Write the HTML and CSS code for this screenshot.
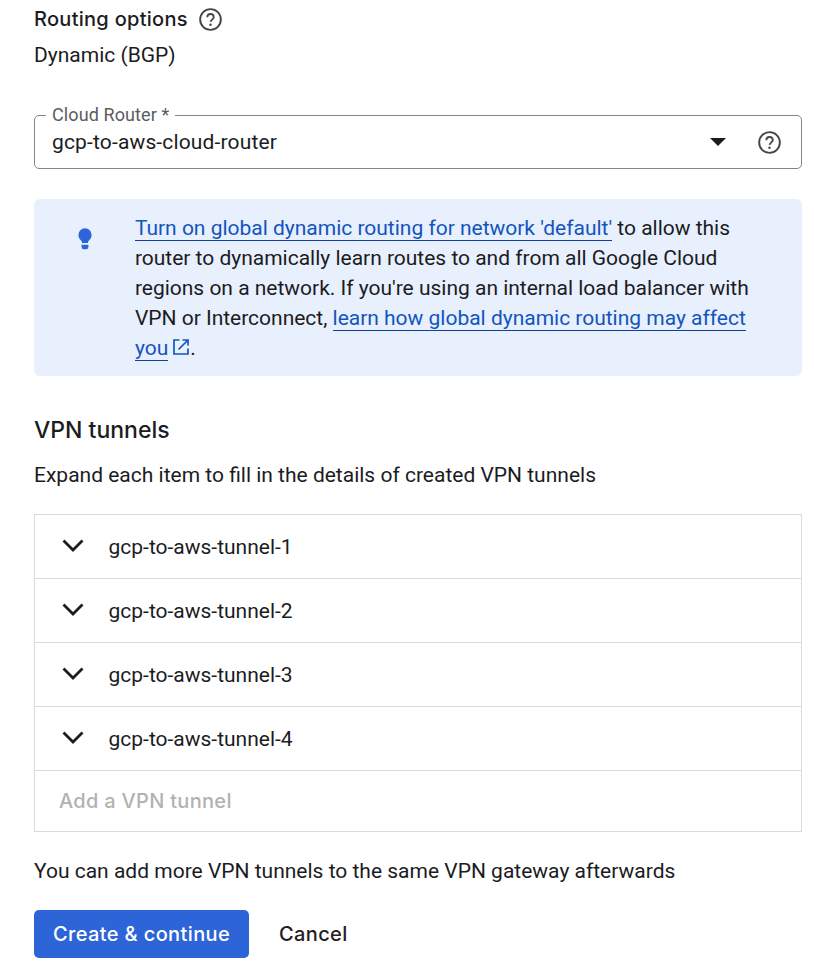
FILE: index.html
```html
<!DOCTYPE html>
<html lang="en">
<head>
<meta charset="utf-8">
<title>Create a VPN</title>
<link rel="stylesheet" href="styles.css">
</head>
<body>
<svg width="0" height="0" class="defs" aria-hidden="true">
  <symbol id="help" viewBox="0 0 24 24"><circle cx="12" cy="12" r="10.8" fill="none" stroke="currentColor" stroke-width="2"/><path d="M8.7 9.6a3.35 3.35 0 0 1 6.7 0c0 2-2.9 2.4-3.3 4.8" fill="none" stroke="currentColor" stroke-width="1.9"/><circle cx="12" cy="17.4" r="1.3" fill="currentColor"/></symbol>
  <symbol id="chevron" viewBox="0 0 22 14"><path d="M1.5 1.5 11 11l9.500-9.500" fill="none" stroke="currentColor" stroke-width="2.800"/></symbol>
</svg>
<main class="page">
  <div class="title"><h3>Routing options</h3><svg class="help"><use href="#help"/></svg></div>
  <p class="value">Dynamic (BGP)</p>
  <fieldset class="field">
    <legend>Cloud Router *</legend>
    <div class="select">
      <span class="selected">gcp-to-aws-cloud-router</span>
      <svg class="caret" viewBox="0 0 16 8"><path d="M0 0h16L8 8z" fill="currentColor"/></svg>
      <svg class="help"><use href="#help"/></svg>
    </div>
  </fieldset>
  <section class="notice">
    <svg class="bulb" viewBox="0 0 14 22"><path d="M7 .3A6.600 6.600 0 0 0 .400 7c0 2.500 1.200 4 2.400 5.200.9.900 1.200 1.600 1.300 2.800h5.800c.1-1.200.4-1.900 1.300-2.800C12.400 11 13.600 9.500 13.600 7A6.600 6.600 0 0 0 7 .3zM3.600 16.800h6.800v2.200a2.300 2.300 0 0 1-2.300 2.300h-2.200a2.300 2.300 0 0 1-2.300-2.300z" fill="currentColor"/></svg>
    <p><a href="#">Turn on global dynamic routing for network 'default'</a> to allow this<br>router to dynamically learn routes to and from all Google Cloud<br>regions on a network. If you're using an internal load balancer with<br>VPN or Interconnect, <a href="#">learn how global dynamic routing may affect<br>you</a><svg class="ext" viewBox="0 0 16 16"><path d="M6.500 1H1v14h14V9.500M9.500 1H15v5.500M15 1 5.500 10.500" fill="none" stroke="currentColor" stroke-width="1.700"/></svg>.</p>
  </section>
  <h2>VPN tunnels</h2>
  <p class="intro">Expand each item to fill in the details of created VPN tunnels</p>
  <div class="list">
    <div class="item"><svg class="chevron"><use href="#chevron"/></svg>gcp-to-aws-tunnel-1</div>
    <div class="item"><svg class="chevron"><use href="#chevron"/></svg>gcp-to-aws-tunnel-2</div>
    <div class="item"><svg class="chevron"><use href="#chevron"/></svg>gcp-to-aws-tunnel-3</div>
    <div class="item"><svg class="chevron"><use href="#chevron"/></svg>gcp-to-aws-tunnel-4</div>
    <div class="add">Add a VPN tunnel</div>
  </div>
  <p class="after">You can add more VPN tunnels to the same VPN gateway afterwards</p>
  <div class="actions"><button class="primary">Create &amp; continue</button><button class="cancel">Cancel</button></div>
</main>
</body>
</html>
```
FILE: styles.css
```css
* { box-sizing: border-box; }
body { margin: 0; background: #fff; color: #1b1c1f; font: 400 21px/30px Roboto, sans-serif; }
h2, h3, p { margin: 0; }
.defs { display: block; height: 0; }
.page { padding: 4px 12px 0 34px; }
.title { display: flex; align-items: center; height: 30px; }
h3 { width: 165px; white-space: nowrap; font: 500 20px/30px Inter, sans-serif; letter-spacing: 0.28px; }
.help { width: 23px; height: 23px; color: #444649; flex: none; }
.value { margin-top: 6px; }
.field { margin: 30px 0 0; padding: 0; height: 69px; border: 1px solid #80868b; border-radius: 5px; min-width: 0; }
.field legend { margin-left: 11px; padding: 0 6px; font-size: 18px; line-height: 30px; height: 30px; color: #5a5d61; letter-spacing: 0.1px; }
.select { display: flex; align-items: center; height: 30px; padding: 0 20px 0 17px; margin-top: -3px; }
.selected { flex: 1; letter-spacing: 0.15px; }
.caret { width: 16px; height: 8px; margin-right: 32px; }
.notice { display: flex; margin-top: 30px; height: 177px; padding: 14px 0 0 44px; border-radius: 6px; background: #e8effd; }
.bulb { width: 14px; height: 22px; margin: 15px 42.500px 0 0.400px; color: #2b65d9; flex: none; }
.notice p { white-space: nowrap; letter-spacing: -0.010px; font-variant-ligatures: common-ligatures; }
a { color: #1255bd; text-decoration: none; border-bottom: 1.5px solid #103f9f; }
.ext { width: 16px; height: 16px; margin: 0 1px 0 5px; color: #1255bd; vertical-align: 0; }
h2 { margin-top: 38px; font: 500 23px/32px Inter, sans-serif; }
.intro { margin-top: 14px; }
.list { margin-top: 24px; border: 1px solid #d9dadc; }
.item { display: flex; align-items: center; height: 64px; padding-left: 26px; border-bottom: 1px solid #d9dadc; }
.chevron { width: 22px; height: 14px; margin: -1px 25px 0 0.500px; }
.add { height: 60px; padding-left: 24px; color: #b1b2b3; font: 500 20px/60px Inter, sans-serif; letter-spacing: 0.3px; }
.after { margin-top: 24px; }
.actions { display: flex; margin-top: 24px; gap: 30px; }
button { height: 48px; padding: 0; border: 0; background: none; font: 500 20px/48px Inter, sans-serif; letter-spacing: 0.38px; color: #1f2023; }
.primary { width: 215px; border-radius: 5px; background: #2d65d8; color: #fff; }
```
